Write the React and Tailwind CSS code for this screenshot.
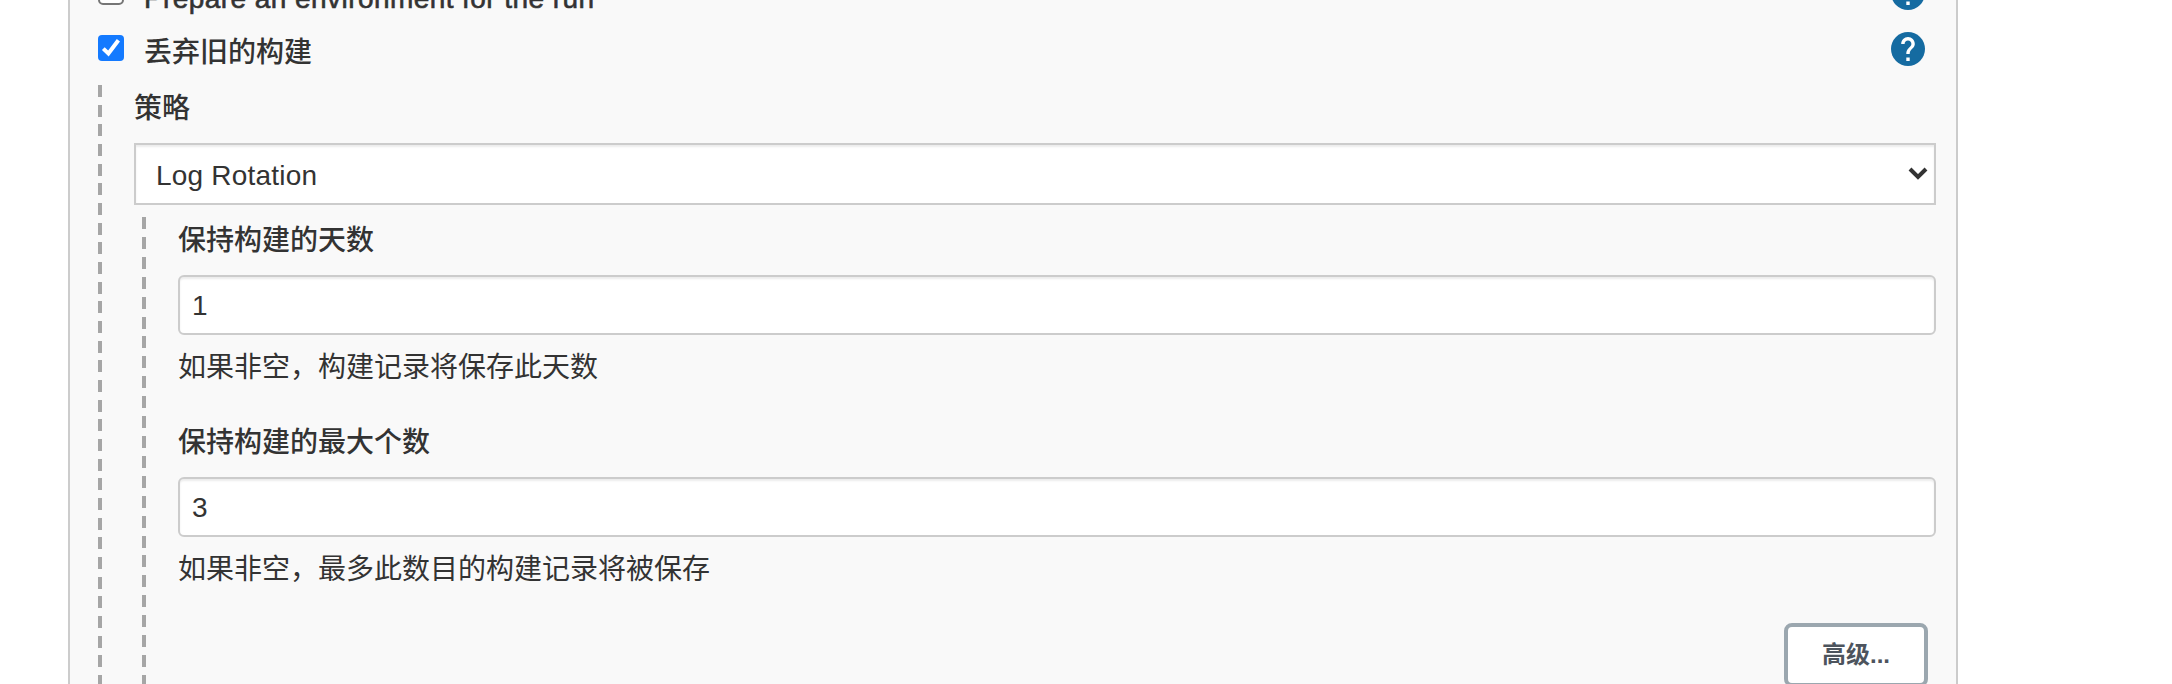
import React from "react";

function HelpIcon() {
  return (
    <svg className="block h-[34px] w-[34px] shrink-0" viewBox="2 2 20 20" role="img" aria-label="Help">
      <circle cx="12" cy="12" r="10" fill="#156ba1" />
      <path
        fill="#fff"
        d="M13 19h-2v-2h2v2zm2.07-7.75l-.9.92C13.45 12.9 13 13.5 13 15h-2v-.5c0-1.1.45-2.1 1.17-2.83l1.24-1.26c.37-.36.59-.86.59-1.41 0-1.1-.9-2-2-2s-2 .9-2 2H8c0-2.21 1.79-4 4-4s4 1.79 4 4c0 .88-.36 1.68-.93 2.25z"
      />
    </svg>
  );
}

function Checkbox({ checked }) {
  if (!checked) {
    return <span className="block h-[26px] w-[26px] shrink-0 rounded-[5px] border-2 border-[#767676] bg-white" />;
  }
  return (
    <span className="block h-[26px] w-[26px] shrink-0 rounded-[4px] bg-[#147aff]">
      <svg className="block" width="26" height="26" viewBox="0 0 26 26" fill="none">
        <path d="M5.3 13.6 L10.4 18.4 L20.4 5.2" stroke="#fff" strokeWidth="4" />
      </svg>
    </span>
  );
}

function OptionRow({ checked, children }) {
  return (
    <div className="flex h-[56px] shrink-0 items-start pr-[31px]">
      <div className="pt-[3px]">
        <Checkbox checked={checked} />
      </div>
      <div className="ml-5 mt-[3px] flex-1 whitespace-nowrap leading-[36px] font-medium">{children}</div>
      <HelpIcon />
    </div>
  );
}

function Field({ label, value, help }) {
  return (
    <div className="flex h-[202px] flex-col">
      <div className="h-[58px] pt-[6px] leading-[36px] font-medium">{label}</div>
      <div className="flex h-[60px] items-center rounded-[6px] border-2 border-[#cccccc] bg-white pl-3 pt-[1px] shadow-[inset_0_2px_2px_rgba(0,0,0,0.075)]">
        {value}
      </div>
      <div className="mt-[15px] leading-[36px]">{help}</div>
    </div>
  );
}

export default function App() {
  return (
    <div className="h-[684px] w-[2172px] overflow-hidden bg-white pl-[68px] font-['Liberation_Sans','Noto_Sans_CJK_SC',sans-serif] text-[28px] text-[#333333]">
      <main className="h-[684px] w-[1890px] overflow-hidden border-x-2 border-[#cccccc] bg-[#f9f9f9] pl-7">
        <div className="-mt-[24px] flex flex-col">
          <OptionRow>
            <span className="block pt-[2px] tracking-[0.43px] [-webkit-text-stroke:0.6px_#333333]">Prepare an environment for the run</span>
          </OptionRow>
          <OptionRow checked>丢弃旧的构建</OptionRow>
        </div>
        <div className="flex pr-5">
          <div className="-mt-[3px] h-[599px] w-1 shrink-0 bg-[repeating-linear-gradient(to_bottom,#a6a6a6_0_12px,transparent_12px_19.670px)]" />
          <div className="ml-8 flex-1">
            <div className="h-[55px] pt-[3px] leading-[36px] font-medium">策略</div>
            <div className="flex h-[62px] items-center justify-between border-2 border-[#cccccc] bg-white pl-5 pr-[6px] shadow-[inset_0_2px_2px_rgba(0,0,0,0.075)]">
              <span className="pt-[3px] tracking-[0.2px]">Log Rotation</span>
              <svg width="20" height="14" viewBox="0 0 20 14" fill="none">
                <path d="M2 2 L10 10 L18 2" stroke="#333" strokeWidth="4" />
              </svg>
            </div>
            <div className="flex pl-2 pt-3">
              <div className="h-[467px] w-1 shrink-0 bg-[repeating-linear-gradient(to_bottom,#a6a6a6_0_12px,transparent_12px_19.910px)]" />
              <div className="ml-8 flex-1">
                <Field label="保持构建的天数" value="1" help="如果非空，构建记录将保存此天数" />
                <Field label="保持构建的最大个数" value="3" help="如果非空，最多此数目的构建记录将被保存" />
                <div className="flex justify-end pr-2 pt-[2px]">
                  <button className="h-[64px] w-[144px] rounded-[8px] border-4 border-[#9ba7af] bg-white text-[24px] font-bold text-[#4d545d]">
                    高级...
                  </button>
                </div>
              </div>
            </div>
          </div>
        </div>
      </main>
    </div>
  );
}
